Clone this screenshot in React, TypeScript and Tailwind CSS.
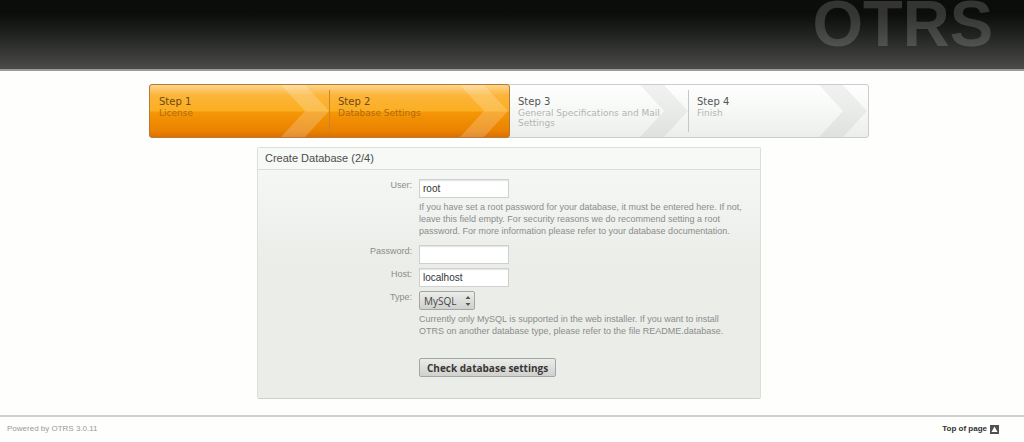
import type { ReactNode } from "react";

type Step = { title: string; text: string; active: boolean; divider: boolean };

const steps: Step[] = [
  { title: "Step 1", text: "License", active: true, divider: true },
  { title: "Step 2", text: "Database Settings", active: true, divider: false },
  { title: "Step 3", text: "General Specifications and Mail Settings", active: false, divider: true },
  { title: "Step 4", text: "Finish", active: false, divider: false },
];

const inputClass =
  "block h-[19px] w-[90px] border border-[#cfd1cf] bg-white px-[3px] text-[10px] text-[#333] shadow-[inset_0_1px_1px_#e4e4e4] outline-none";

function StepItem({ step }: { step: Step }) {
  return (
    <li className="relative flex flex-1 py-[5px] first:pl-px">
      <svg
        className={step.active ? "absolute top-0 right-0 h-full w-[49px] text-white/20" : "absolute top-0 right-0 h-full w-[49px] text-black/5"}
        viewBox="0 0 49 52"
        preserveAspectRatio="none"
        aria-hidden="true"
      >
        <path d="M0 0H24L48 26L24 52H0L24 26Z" fill="currentColor" />
      </svg>
      <div
        className={
          "relative flex-1 pt-[6px] pr-6 pl-[8px] font-['DejaVu_Sans',sans-serif] " +
          (step.divider ? (step.active ? "border-r border-[#c8842e]" : "border-r border-[#c6c8c6]") : "")
        }
      >
        <h2 className={step.active ? "text-[10px] leading-[12px] text-[#6b4a14]" : "text-[10px] leading-[12px] text-[#555]"}>{step.title}</h2>
        <p className={step.active ? "text-[9px] leading-[10px] text-[#b06a10]" : "text-[9px] leading-[10px] text-[#b4b4b4]"}>{step.text}</p>
      </div>
    </li>
  );
}

function Row({ id, label, help, children }: { id: string; label: string; help?: string; children: ReactNode }) {
  return (
    <div className="flex">
      <label htmlFor={id} className="w-[154px] shrink-0 text-right leading-[13px]">
        {label}
      </label>
      <div className="ml-[7px] flex-1">
        {children}
        {help && <p className="mt-[3px] mb-[4px] pr-4 leading-[12px]">{help}</p>}
      </div>
    </div>
  );
}

export default function App() {
  return (
    <div className="bg-[#fefefd] font-['Liberation_Sans',Arial,sans-serif]">
      <header className="flex h-[71px] justify-end border-b-2 border-[#9b9b9a] bg-linear-to-b from-[#0b0d0a] from-20% to-[#4b4c4a] pr-[31px]">
        <div className="text-[65px] leading-[48px] font-bold text-white/17">OTRS</div>
      </header>

      <main className="pt-[13px] pr-[6px]">
        <ol className="mx-auto flex h-[54px] w-[720px] max-w-full rounded-[3px] border border-[#cbcdcb] bg-linear-to-b from-[#fefefe] via-[#f6f8f6] to-[#eceeec]">
          <li className="-m-px flex flex-1 rounded-[3px] border border-[#b5793a] bg-[linear-gradient(to_bottom,#fdd58a_0%,#fcb53a_20%,#fbae20_50%,#f59706_52%,#ea8200_88%,#dc7000_100%)]">
            <ol className="flex flex-1">
              {steps.slice(0, 2).map((s) => (
                <StepItem key={s.title} step={s} />
              ))}
            </ol>
          </li>
          <li className="flex flex-1">
            <ol className="flex flex-1">
              {steps.slice(2).map((s) => (
                <StepItem key={s.title} step={s} />
              ))}
            </ol>
          </li>
        </ol>

        <section className="mx-auto mt-[9px] w-[504px] max-w-full rounded-[2px] border border-[#dcdedb] border-b-[#cfd1cf] text-[9px] text-[#8c8c8c]">
          <h1 className="border-b border-[#dadeda] bg-[#f7f9f6] px-[7px] text-[11px] leading-[21px] text-[#4c4c4c]">Create Database (2/4)</h1>
          <form className="flex flex-col gap-[4px] bg-linear-to-b from-[#f5f7f5] to-[#ebede9] to-40% pt-[9px] pb-[21px]" onSubmit={(e) => e.preventDefault()}>
            <Row
              id="user"
              label="User:"
              help="If you have set a root password for your database, it must be entered here. If not, leave this field empty. For security reasons we do recommend setting a root password. For more information please refer to your database documentation."
            >
              <input id="user" className={inputClass} defaultValue="root" />
            </Row>
            <Row id="password" label="Password:">
              <input id="password" type="password" className={inputClass} />
            </Row>
            <Row id="host" label="Host:">
              <input id="host" className={inputClass} defaultValue="localhost" />
            </Row>
            <Row
              id="type"
              label="Type:"
              help="Currently only MySQL is supported in the web installer. If you want to install OTRS on another database type, please refer to the file README.database."
            >
              <div className="relative w-[56px]">
                <select
                  id="type"
                  className="block h-[19px] w-full appearance-none rounded-[2px] border border-[#a5a6a4] bg-linear-to-b from-[#ebedeb] to-[#cfd1ce] pl-[4px] font-['Open_Sans',sans-serif] text-[10px] leading-[16px] text-[#444]"
                >
                  <option>MySQL</option>
                </select>
                <svg className="pointer-events-none absolute top-[5px] right-[4px]" width="6" height="10" viewBox="0 0 6 10" aria-hidden="true">
                  <path d="M3 0L5.5 3H.5ZM3 10L.5 7H5.5Z" fill="#555" />
                </svg>
              </div>
            </Row>
            <div className="flex pt-[13px]">
              <div className="w-[154px] shrink-0" />
              <button className="ml-[7px] h-[19px] rounded-[2px] border border-[#a5a6a4] bg-linear-to-b from-[#ebedeb] to-[#cfd1ce] px-[7px] font-['Open_Sans',sans-serif] text-[10px] leading-[16px] font-bold text-[#3c3634]">
                Check database settings
              </button>
            </div>
          </form>
        </section>
      </main>

      <footer className="mt-[16px] flex justify-between border-t-2 border-[#cfcfcf] pt-[6px] pr-[25px] pb-[7px] pl-[7px] text-[8px] leading-[12px]">
        <p className="text-[#9a9a9a]">Powered by OTRS 3.0.11</p>
        <a href="#" className="flex items-center gap-[3px] font-bold text-[#333]">
          Top of page
          <svg width="9" height="9" viewBox="0 0 9 9" aria-hidden="true">
            <path d="M0 0H9V9H0Z" fill="#505050" />
            <path d="M4.5 1.5L7.5 7H1.5Z" fill="#fff" />
          </svg>
        </a>
      </footer>
    </div>
  );
}
